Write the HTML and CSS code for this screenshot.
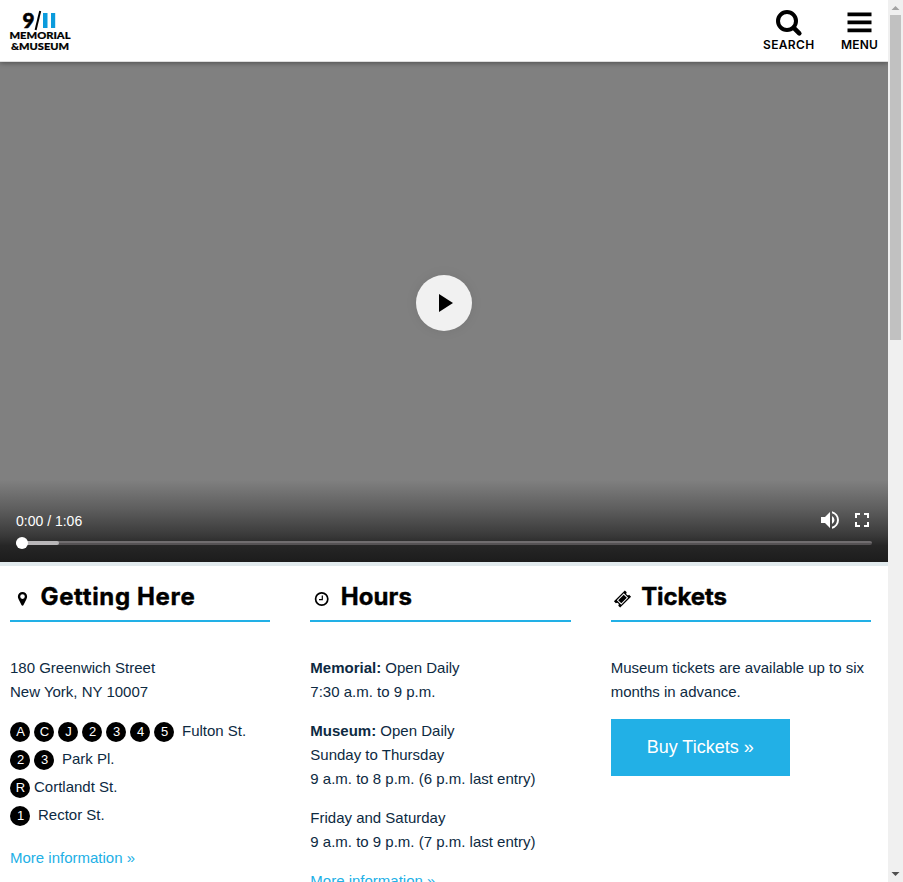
FILE: index.html
```html
<!DOCTYPE html>
<html lang="en">
<head>
<meta charset="utf-8">
<title>9/11 Memorial &amp; Museum</title>
<link rel="stylesheet" href="styles.css">
</head>
<body>
<div class="page">
  <header class="header">
    <svg class="logo" width="62" height="42" viewBox="0 0 62 42" role="img" aria-label="9/11 Memorial and Museum">
      <text class="logo-nine" x="12.500" y="17.700" textLength="12" lengthAdjust="spacingAndGlyphs">9</text>
      <path d="M30.200 1 25.600 20" stroke="#000" stroke-width="2"/>
      <path d="M33 3h4.500v15H33zM41 3h4.200v15H41z" fill="#0b9bdc"/>
      <text class="logo-name" x="-.5" y="29.300" textLength="61" lengthAdjust="spacingAndGlyphs">MEMORIAL</text>
      <text class="logo-name" x="1" y="39.800" textLength="58" lengthAdjust="spacingAndGlyphs">&amp;MUSEUM</text>
    </svg>
    <nav class="nav">
      <a class="nav-item">
        <svg width="28" height="28" viewBox="0 0 28 28" fill="none" stroke="#000"><circle cx="12" cy="12" r="9" stroke-width="4"/><path d="m18.800 18.800 5.500 5.500" stroke-width="4.600" stroke-linecap="round"/></svg>
        <span class="search-label">SEARCH</span>
      </a>
      <a class="nav-item">
        <svg width="28" height="28" viewBox="0 0 28 28"><path d="M1.500 2.500h24v3.800h-24zm0 8h24v3.800h-24zm0 8h24v3.800h-24z"/></svg>
        <span class="menu-label">MENU</span>
      </a>
    </nav>
  </header>

  <section class="video">
    <button class="play" aria-label="Play"><svg width="56" height="56"><path d="M23 19v18l14-9z"/></svg></button>
    <div class="controls">
      <div class="control-row">
        <span class="time">0:00 / 1:06</span>
        <svg class="volume" width="24" height="24" viewBox="0 0 24 24" fill="#fff"><path d="M3 9v6h4l5 5V4L7 9H3zm13.500 3A4.500 4.500 0 0 0 14 7.970v8.050A4.470 4.470 0 0 0 16.500 12zM14 3.230v2.060a7 7 0 0 1 0 13.420v2.060a9 9 0 0 0 0-17.540z"/></svg>
        <svg width="24" height="24" viewBox="0 0 24 24" fill="#fff"><path d="M7 14H5v5h5v-2H7v-3zm-2-4h2V7h3V5H5v5zm12 7h-3v2h5v-5h-2v3zM14 5v2h3v3h2V5h-5z"/></svg>
      </div>
      <div class="track"><div class="buffered"></div><div class="thumb"></div></div>
    </div>
  </section>

  <main class="columns">
    <section>
      <h2><svg width="16" height="18" viewBox="0 0 16 18"><path fill-rule="evenodd" d="M8.500 2a4.600 4.600 0 0 0-4.600 4.600c0 1.200.3 1.800.7 2.600l2.900 5.900c.4.900 1.600.9 2 0l2.900-5.900c.4-.8.7-1.400.7-2.600A4.600 4.600 0 0 0 8.500 2zm0 2.300a2.300 2.300 0 1 1 0 4.600 2.300 2.300 0 0 1 0-4.600z"/></svg><span class="t-getting">Getting Here</span></h2>
      <p>180 Greenwich Street<br>New York, NY 10007</p>
      <ul class="stations">
        <li><b>A</b><b>C</b><b>J</b><b>2</b><b>3</b><b>4</b><b>5</b><span class="spaced">Fulton St.</span></li>
        <li><b>2</b><b>3</b><span class="spaced">Park Pl.</span></li>
        <li><b>R</b><span>Cortlandt St.</span></li>
        <li><b>1</b><span class="spaced">Rector St.</span></li>
      </ul>
      <p><a class="more">More information »</a></p>
    </section>
    <section>
      <h2><svg width="16" height="18" viewBox="0 0 16 18" fill="none" stroke="#000"><circle cx="7.700" cy="9" r="6.100" stroke-width="1.700"/><path d="M8.300 5.500v4.200H5" stroke-width="1.200"/></svg><span class="t-hours">Hours</span></h2>
      <p><strong>Memorial:</strong> Open Daily<br>7:30 a.m. to 9 p.m.</p>
      <p><strong>Museum:</strong> Open Daily<br>Sunday to Thursday<br>9 a.m. to 8 p.m. (6 p.m. last entry)</p>
      <p>Friday and Saturday<br>9 a.m. to 9 p.m. (7 p.m. last entry)</p>
      <p><a class="more">More information »</a></p>
    </section>
    <section>
      <h2><svg width="16" height="18" viewBox="0 0 16 18"><g transform="rotate(-45 7.500 9)"><path fill-rule="evenodd" d="M-.2 4.600h15.400v2.700a1.700 1.700 0 0 0 0 3.400v2.700H-.2v-2.700a1.700 1.700 0 0 0 0-3.400zM2.600 5.900v6.200h9.800V5.900z"/><path d="M3.600 6.800h7.800v4.400H3.600z"/></g></svg><span class="t-tickets">Tickets</span></h2>
      <p>Museum tickets are available up to six months in advance.</p>
      <a class="buy">Buy Tickets »</a>
    </section>
  </main>
</div>
<div class="scrollbar">
  <svg width="15" height="15"><path d="M3.500 10 7.500 6l4 4z" fill="#a3a3a3"/></svg>
  <div class="scroll-thumb"></div>
  <svg class="down" width="15" height="15"><path d="m3.500 5 4 4 4-4z" fill="#505050"/></svg>
</div>
</body>
</html>
```
FILE: styles.css
```css
* { box-sizing: border-box; }
body {
  margin: 0;
  height: 882px;
  overflow: hidden;
  display: flex;
  background: #fff;
  color: #0d2a42;
  font: 15px/24px "Liberation Sans", Arial, sans-serif;
}
svg { display: block; flex: none; }
.page { width: 888px; height: 882px; overflow: hidden; }

.header {
  position: relative;
  z-index: 1;
  height: 62px;
  display: flex;
  justify-content: space-between;
  padding: 10px 10px 0;
  background: #fff;
  border-bottom: 1px solid #ddd;
  box-shadow: 0 1px 5px rgba(0, 0, 0, .4);
}
.logo { overflow: visible; }
.logo-nine { font: 900 21px Lato, sans-serif; stroke: #000; stroke-width: .6px; }
.logo-name { font: 900 9.6px Lato, sans-serif; stroke: #000; stroke-width: .2px; }
.nav { display: flex; gap: 26px; color: #000; }
.nav-item {
  display: flex;
  flex-direction: column;
  align-items: center;
  font: 600 12px/14px Inter, sans-serif;
}
.nav-item svg { margin-top: -1px; margin-bottom: 1px; }
.nav-item:last-child svg { margin-top: -.5px; margin-bottom: .5px; }
.search-label, .menu-label { white-space: nowrap; }
.search-label { width: 52px; letter-spacing: .35px; }
.menu-label { width: 37px; letter-spacing: .2px; }

.video {
  height: 504px;
  display: flex;
  flex-direction: column;
  align-items: center;
  justify-content: space-between;
  background: #808080;
  border-bottom: 4px solid #e1eaed;
}
.play {
  width: 56px;
  height: 56px;
  margin-top: 213px;
  padding: 0;
  border: 0;
  border-radius: 50%;
  background: #f1f1f1;
  box-shadow: 0 0 12px rgba(0, 0, 0, .08);
}
.controls {
  width: 100%;
  height: 82px;
  padding: 28px 16px 0;
  background: linear-gradient(#808080, #5e5e5e 35%, #393939 68%, #262626 80%, #1c1c1c);
}
.control-row { display: flex; align-items: center; height: 24px; color: #fff; }
.time { flex: 1; font-size: 14px; padding-top: 2px; }
.volume { margin-right: 8px; }
.control-row svg:last-child { margin-right: -2px; }
.track {
  position: relative;
  height: 4px;
  margin-top: 9px;
  border-radius: 2px;
  background: linear-gradient(#706d6f 50%, #555254 50%);
}
.buffered { width: 43px; height: 4px; border-radius: 2px; background: #b8b6b8; }
.thumb {
  position: absolute;
  left: 0;
  top: -4px;
  width: 12px;
  height: 12px;
  border-radius: 50%;
  background: #fff;
}

.columns {
  display: grid;
  grid-template-columns: repeat(3, 1fr);
  gap: 40px;
  padding: 15px 17px 0 10px;
}
h2 {
  display: flex;
  height: 41px;
  margin: 0 0 34px;
  border-bottom: 2px solid #22b0e6;
  color: #000;
  font: 700 24px/32px Inter, sans-serif;
  white-space: nowrap;
}
h2 svg { margin: 9px 10.5px 0 4px; overflow: visible; }
h2 span { -webkit-text-stroke: .4px #000; }
.t-getting { letter-spacing: .65px; }
.t-hours { letter-spacing: .05px; }
.t-tickets { letter-spacing: -.1px; }
p { margin: 0 0 15px; }
.stations { list-style: none; margin: 0 0 15px; padding: 0; }
.stations li { display: flex; gap: 4px; height: 28px; }
.stations b {
  width: 20px;
  height: 20px;
  margin-top: 3px;
  padding-left: 1px;
  border-radius: 50%;
  background: #000;
  color: #fff;
  font-size: 13px;
  font-weight: 400;
  line-height: 20px;
  text-align: center;
}
.spaced { margin-left: 4px; }
.more { color: #22b0e6; }
.buy {
  display: flex;
  align-items: center;
  justify-content: center;
  width: 179px;
  height: 57px;
  padding-bottom: 2px;
  background: #22b0e6;
  color: #fff;
  font-size: 18px;
}

.scrollbar {
  width: 15px;
  height: 882px;
  display: flex;
  flex-direction: column;
  background: #f0f0f0;
}
.scroll-thumb { width: 11px; height: 325px; margin-left: 2px; background: #c1c1c1; }
.down { margin-top: auto; }
```
